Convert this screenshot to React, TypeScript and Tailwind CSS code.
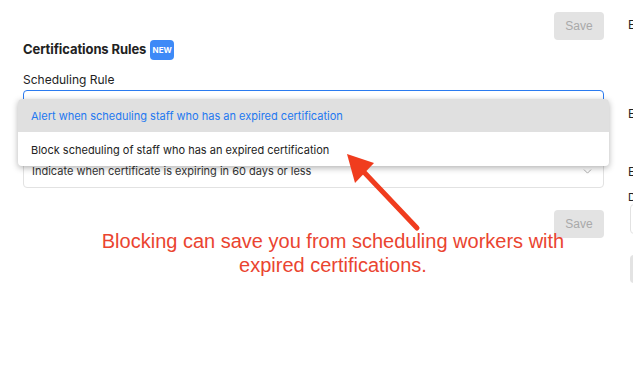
import { ChevronDown } from 'lucide-react'

const ui = { fontFamily: 'Inter, "Noto Sans", sans-serif' }
const note = { fontFamily: '"Liberation Sans", Arial, sans-serif' }

function SaveButton() {
  return (
    <div className="flex justify-end">
      <button
        type="button"
        disabled
        className="h-7 w-[50px] rounded-[4px] bg-[#e3e3e3] text-[12px] text-[#a9a9a9]"
        style={note}
      >
        Save
      </button>
    </div>
  )
}

export default function App() {
  return (
    <div className="relative flex h-[372px] w-[633px] overflow-hidden bg-white text-[#222]" style={ui}>
      {/* main settings column */}
      <div className="w-[628px] shrink-0 pl-[23px] pr-[24px] pt-3">
        <SaveButton />

        <div className="flex h-5 items-center gap-[4px]">
          <h2 className="text-[13px] font-bold tracking-[-0.1px] text-[#222]">Certifications Rules</h2>
          <span className="flex h-5 w-6 items-center justify-center rounded-[4px] bg-[#3d8af7] text-[8px] font-bold text-white">
            NEW
          </span>
        </div>

        <p className="mt-[12px] text-[12px] leading-[16px] text-[#222]">Scheduling Rule</p>

        <div className="mt-[2px] h-9 rounded-[4px] border border-[#2b7bf0]" />

        <div className="mt-[29px] flex h-[33px] items-center justify-between rounded-[4px] border border-[#e2e2e2] pl-[8px] pr-[9px]">
          <span className="text-[11px] text-[#333]">Indicate when certificate is expiring in 60 days or less</span>
          <ChevronDown size={13} strokeWidth={1.5} className="text-[#9a9a9a]" />
        </div>

        <div className="mt-[22px]">
          <SaveButton />
        </div>
      </div>

      {/* right column, cut off by the window */}
      <div className="w-[200px] shrink-0 pt-[16px] text-[12px] text-[#222]">
        <p className="h-[89px] whitespace-nowrap">Enable alerts</p>
        <p className="h-[58px] whitespace-nowrap">Enable blocking</p>
        <p className="h-[27px] whitespace-nowrap">Expiring soon</p>
        <p className="h-[14px] whitespace-nowrap text-[11px] leading-[14px]">Days</p>
        <div className="ml-[2px] h-[30px] rounded-[4px] border border-[#e2e2e2]" />
        <div className="ml-[2px] mt-[21px] h-[28px] rounded-[4px] bg-[#e3e3e3]" />
      </div>

      {/* open dropdown menu */}
      <div className="absolute left-[18px] top-[99px] w-[591px] overflow-hidden rounded-[4px] bg-white shadow-[0_2px_6px_rgba(0,0,0,0.3)]">
        <div className="flex h-[33px] items-center bg-[#e0e0e0] pl-[13px] pt-[2px] text-[11px] text-[#2378f0]">
          Alert when scheduling staff who has an expired certification
        </div>
        <div className="flex h-[34px] items-center pl-[13px] pt-[2px] text-[11px] text-[#222]">
          Block scheduling of staff who has an expired certification
        </div>
      </div>

      {/* annotation */}
      <svg className="absolute left-0 top-0" width="633" height="372" viewBox="0 0 633 372">
        <line x1="417" y1="228" x2="362" y2="170" stroke="#f03c1e" strokeWidth="5" strokeLinecap="round" />
        <polygon points="347,154 374,163 355,183" fill="#f03c1e" />
      </svg>
      <p
        className="absolute left-0 top-[229px] w-[666px] text-center text-[20px] leading-[24px] text-[#ea4430]"
        style={note}
      >
        Blocking can save you from scheduling workers with
        <br />
        expired certifications.
      </p>
    </div>
  )
}
